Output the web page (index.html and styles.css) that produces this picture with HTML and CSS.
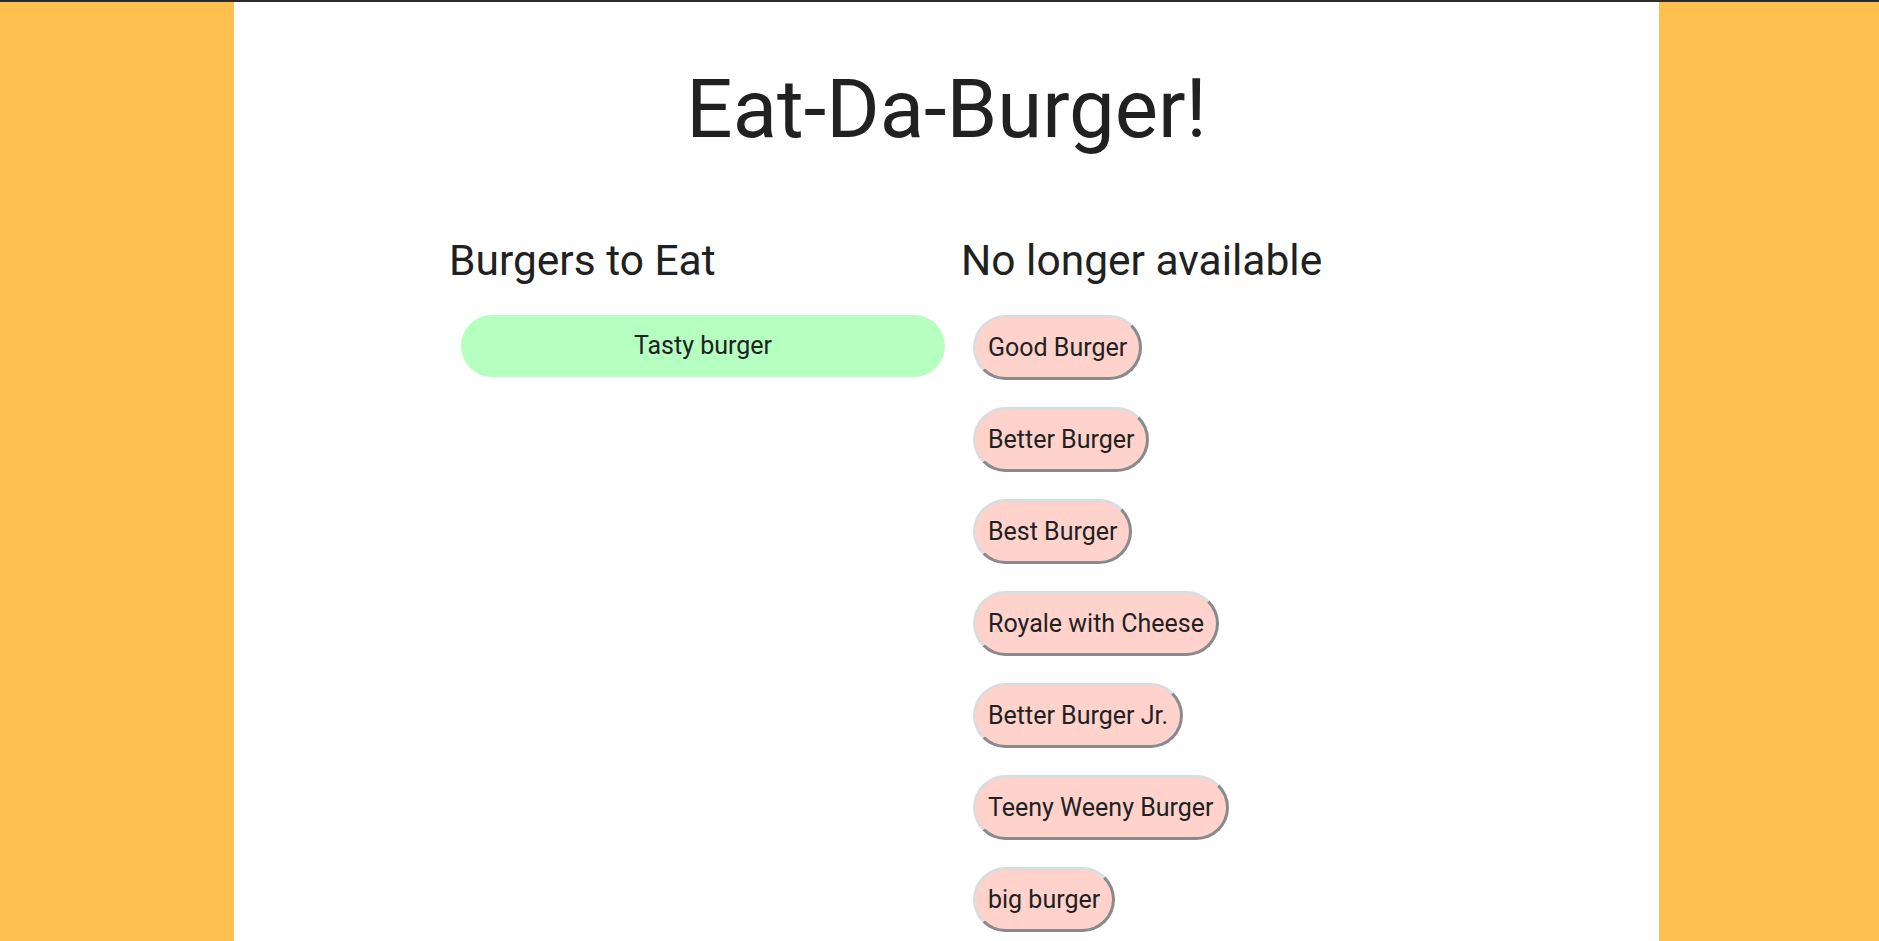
FILE: index.html
```html
<!DOCTYPE html>
<html lang="en">
<head>
<meta charset="utf-8">
<title>Eat-Da-Burger!</title>
<link rel="stylesheet" href="styles.css">
</head>
<body>
<div class="page">
  <h1 class="title">Eat-Da-Burger!</h1>
  <div class="columns">
    <section class="col">
      <h2 class="col-heading">Burgers to Eat</h2>
      <div class="list">
        <button class="burger burger-fresh">Tasty burger</button>
      </div>
    </section>
    <section class="col">
      <h2 class="col-heading">No longer available</h2>
      <div class="list list-eaten">
        <button class="burger burger-eaten">Good Burger</button>
        <button class="burger burger-eaten">Better Burger</button>
        <button class="burger burger-eaten">Best Burger</button>
        <button class="burger burger-eaten">Royale with Cheese</button>
        <button class="burger burger-eaten">Better Burger Jr.</button>
        <button class="burger burger-eaten">Teeny Weeny Burger</button>
        <button class="burger burger-eaten">big burger</button>
      </div>
    </section>
  </div>
</div>
</body>
</html>
```

FILE: styles.css
```css
html, body {
  margin: 0;
  padding: 0;
}

body {
  background: #ffc04f;
  border-top: 2px solid #2b2b2b;
  font-family: Roboto, "Liberation Sans", sans-serif;
  color: #212121;
  min-height: 939px;
  overflow: hidden;
}

.page {
  background: #ffffff;
  width: 1425px;
  margin-left: 234px;
  min-height: 939px;
  padding-top: 59px;
  box-sizing: border-box;
}

.title {
  margin: 0;
  text-align: center;
  font-size: 81.5px;
  line-height: 1.2;
  font-weight: 400;
}

.columns {
  display: grid;
  grid-template-columns: 512px 512px;
  margin-left: 215px;
  margin-top: 76px;
}

.col-heading {
  margin: 0 0 29px 0;
  font-size: 42.5px;
  line-height: 1.2;
  font-weight: 400;
}

.list {
  display: flex;
  flex-direction: column;
  align-items: stretch;
  padding: 0 16px 0 12px;
}

.list-eaten {
  align-items: flex-start;
  gap: 26.5px;
}

.burger {
  font-family: Roboto, "Liberation Sans", sans-serif;
  font-size: 25px;
  line-height: 1.5;
  color: #212121;
  border-radius: 999px;
  cursor: pointer;
  margin: 0;
}

.burger-fresh {
  background: #b5ffc1;
  border: none;
  padding: 12.5px 12px;
  text-align: center;
}

.burger-eaten {
  background: #ffd3cc;
  padding: 11px 12px;
  border-width: 3px;
  border-style: solid;
  border-color: #dcdcdc #8a8a8a #8a8a8a #dcdcdc;
}
```
